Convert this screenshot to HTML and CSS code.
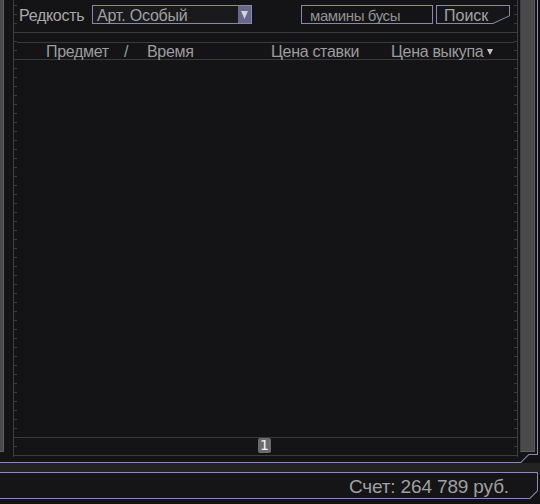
FILE: index.html
```html
<!DOCTYPE html>
<html lang="ru">
<head>
<meta charset="utf-8">
<title>Аукцион</title>
<link rel="stylesheet" href="styles.css">
</head>
<body>
<div class="app">
  <div class="frame">
    <div class="frame-inner">
      <div class="lbar"></div>
      <div class="ruler ruler-l"></div>
      <div class="content">
        <div class="toolbar">
          <span class="label">Редкость</span>
          <div class="select">
            <span class="select-val">Арт. Особый</span>
            <span class="select-btn"><svg width="7" height="8" viewBox="0 0 7 8"><path d="M0 0H7L3.5 8Z" fill="#d2d2dc"/></svg></span>
          </div>
          <div class="search">мамины бусы</div>
          <div class="btn-outer"><div class="btn-inner">Поиск</div></div>
        </div>
        <div class="gap-row"></div>
        <div class="thead">
          <span class="col c-item">Предмет</span>
          <span class="col c-slash">/</span>
          <span class="col c-time">Время</span>
          <span class="col c-bid">Цена ставки</span>
          <span class="col c-buy">Цена выкупа<svg class="sort" width="6" height="6" viewBox="0 0 6 6"><path d="M0 0H6L3 6Z" fill="#c4c4c4"/></svg></span>
        </div>
        <div class="list"></div>
        <div class="pager"><span class="page">1</span></div>
      </div>
      <div class="ruler ruler-r"></div>
      <div class="scroll"></div>
    </div>
  </div>
  <div class="band"></div>
  <div class="foot"><div class="foot-inner">Счет: 264 789 руб.</div></div>
</div>
</body>
</html>
```
FILE: styles.css
```css
html, body {
  margin: 0;
  padding: 0;
  background: #121214;
}
body {
  width: 540px;
  height: 504px;
  overflow: hidden;
  font-family: "Liberation Sans", Arial, sans-serif;
  color: #a2a2a2;
}
.app {
  display: flex;
  flex-direction: column;
  width: 540px;
  height: 504px;
}
.frame {
  width: 538px;
  height: 463px;
  background: #8a8ab4;
  clip-path: polygon(0 0, 538px 0, 538px 455px, 529px 455px, 521px 463px, 0 463px);
}
.frame-inner {
  width: 537px;
  height: 462px;
  background: #141416;
  display: flex;
  align-items: flex-start;
  clip-path: polygon(0 0, 537px 0, 537px 454px, 528.6px 454px, 520.6px 462px, 0 462px);
}
.lbar {
  width: 3px;
  height: 451px;
  background: #4a4a4a;
  border-right: 1px solid #5e5e5e;
  border-bottom: 1px solid #5e5e5e;
}
.ruler {
  width: 3px;
  height: 457px;
  background: repeating-linear-gradient(to bottom, transparent 0 5px, #3c3c3c 5px 6px, transparent 6px 9px);
}
.ruler-l {
  margin-left: 9px;
  border-left: 1px solid #3c3c3c;
}
.ruler-r {
  border-right: 1px solid #3c3c3c;
}
.content {
  width: 497px;
  display: flex;
  flex-direction: column;
  height: 456px;
}
.toolbar {
  box-sizing: border-box;
  padding: 5px 4px 0 2px;
  border-bottom: 1px solid #3a3a3a;
  height: 33px;
  display: flex;
  align-items: flex-start;
}
.label {
  width: 73px;
  font-size: 16px;
  line-height: 21px;
  color: #a8a8a8;
  letter-spacing: -0.3px;
}
.select {
  width: 160px;
  height: 19px;
  box-sizing: border-box;
  border: 1px solid #8787b0;
  border-right: none;
  background: #1a1a1c;
  display: flex;
}
.select-val {
  flex: 1;
  padding-left: 4px;
  font-size: 16px;
  line-height: 19px;
  height: 17px;
  color: #a0a0a0;
  letter-spacing: -0.2px;
}
.select-btn {
  width: 13px;
  height: 17px;
  background: #68688a;
  border-right: 1px solid #8787b0;
  display: flex;
  align-items: center;
  justify-content: center;
}
.search {
  margin-left: auto;
  width: 132px;
  height: 19px;
  box-sizing: border-box;
  border: 1px solid #8787b0;
  padding-left: 8px;
  font-size: 15px;
  line-height: 19px;
  color: #929292;
  letter-spacing: -0.4px;
}
.btn-outer {
  margin-left: 3px;
  width: 74px;
  height: 19px;
  background: #8787b0;
  clip-path: polygon(0 0, 74px 0, 74px 11px, 57px 19px, 0 19px);
  padding: 1px;
  box-sizing: border-box;
}
.btn-inner {
  width: 72px;
  height: 17px;
  background: #161618;
  clip-path: polygon(0 0, 72px 0, 72px 9.4px, 55.8px 17px, 0 17px);
  padding-left: 7px;
  box-sizing: border-box;
  font-size: 16px;
  line-height: 19px;
  color: #a4a4a4;
}
.gap-row {
  height: 9px;
  border-bottom: 1px solid #3a3a3a;
}
.thead {
  height: 16px;
  border-bottom: 1px solid #3a3a3a;
  display: flex;
  padding-left: 29px;
  font-size: 16px;
  line-height: 17px;
  letter-spacing: -0.3px;
  color: #9c9c9c;
}
.col { display: block; white-space: nowrap; }
.c-item { width: 78px; }
.c-slash { width: 23px; }
.c-time { width: 124px; }
.c-bid { width: 120px; }
.c-buy { display: flex; align-items: center; gap: 4px; }
.sort { margin-top: 1px; }
.list {
  flex: 1;
  border-bottom: 1px solid #3a3a3a;
}
.pager {
  height: 17px;
  border-bottom: 1px solid #3a3a3a;
  display: flex;
  justify-content: center;
  align-items: flex-start;
  padding-right: 2px;
}
.page {
  width: 13px;
  height: 15px;
  background: #6b6b6b;
  border-radius: 2px;
  font-family: "DejaVu Sans", sans-serif;
  font-size: 14px;
  line-height: 15px;
  text-align: center;
  color: #f2f2f2;
}
.scroll {
  margin-left: 2px;
  width: 13px;
  height: 451px;
  background: #4a4a4a;
  border-left: 1px solid #3e3e3e;
  border-right: 1px solid #5a5a5a;
  border-bottom: 1px solid #5e5e5e;
}
.band {
  height: 9px;
  background: #232323;
}
.foot {
  width: 538px;
  height: 27px;
  background: #8a8ab4;
  clip-path: polygon(0 0, 538px 0, 538px 19px, 530px 27px, 0 27px);
  padding-top: 1px;
  box-sizing: border-box;
}
.foot-inner {
  width: 537px;
  height: 25px;
  box-sizing: border-box;
  background: #151517;
  clip-path: polygon(0 0, 537px 0, 537px 17.6px, 529.6px 25px, 0 25px);
  padding: 2px 28px 0 0;
  text-align: right;
  font-size: 19px;
  line-height: 23px;
  letter-spacing: -0.15px;
  color: #a0a0a0;
}
```
